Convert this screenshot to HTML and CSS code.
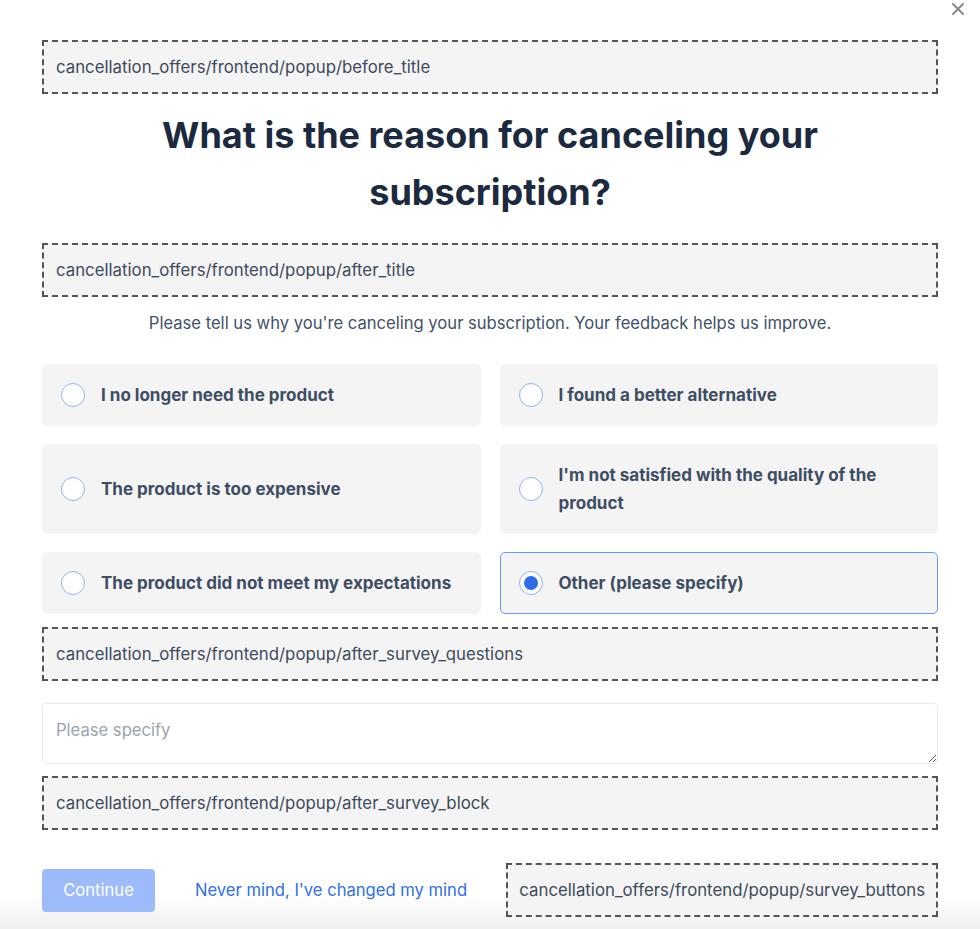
FILE: index.html
```html
<!DOCTYPE html>
<html lang="en">
<head>
    <meta charset="UTF-8">
    <meta name="viewport" content="width=device-width, initial-scale=1.0">
    <title>Cancel subscription</title>
    <link rel="stylesheet" href="styles.css">
</head>
<body>
    <div class="popup">
        <button class="close" aria-label="Close">
            <svg width="12" height="12" viewBox="0 0 12 12"><path d="M1 1L11 11M11 1L1 11" stroke="#8a8a8a" stroke-width="2" stroke-linecap="round"/></svg>
        </button>

        <div class="hook hook-top">cancellation_offers/frontend/popup/before_title</div>
        <h1 class="title">What is the reason for canceling your subscription?</h1>
        <div class="hook">cancellation_offers/frontend/popup/after_title</div>
        <p class="subtitle">Please tell us why you're canceling your subscription. Your feedback helps us improve.</p>

        <div class="options">
            <label class="option"><span class="radio"></span><span>I no longer need the product</span></label>
            <label class="option"><span class="radio"></span><span>I found a better alternative</span></label>
            <label class="option"><span class="radio"></span><span>The product is too expensive</span></label>
            <label class="option"><span class="radio"></span><span>I'm not satisfied with the quality of the product</span></label>
            <label class="option"><span class="radio"></span><span>The product did not meet my expectations</span></label>
            <label class="option selected"><span class="radio"></span><span>Other (please specify)</span></label>
        </div>

        <div class="hook hook-questions">cancellation_offers/frontend/popup/after_survey_questions</div>
        <textarea class="specify" placeholder="Please specify"></textarea>
        <div class="hook">cancellation_offers/frontend/popup/after_survey_block</div>

        <div class="actions">
            <button class="continue" disabled>Continue</button>
            <a class="nevermind" href="#">Never mind, I've changed my mind</a>
            <div class="hook hook-buttons">cancellation_offers/frontend/popup/survey_buttons</div>
        </div>
    </div>
</body>
</html>
```

FILE: styles.css
```css
html, body { height: 100%; }
body {
    margin: 0;
    font-family: Inter, "Noto Sans", sans-serif;
    color: #3b4a5e;
    background: linear-gradient(to bottom, #fff 0, #fff 895px, #efefef 929px);
    overflow: hidden;
}
.popup { position: relative; padding: 40px 42px 0; }
.close {
    position: absolute; top: 3px; right: 16px;
    background: none; border: none; padding: 0; cursor: pointer;
}
.hook {
    border: 2px dashed #555;
    background: #f4f4f4;
    padding: 13px 12px;
    font-size: 16.8px;
    line-height: 24px;
    color: #3d4a5c;
}
.title {
    margin: 13px 0 22px;
    text-align: center;
    font-size: 36px;
    line-height: 57px;
    font-weight: 700;
    color: #1b2a3f;
    padding: 0 100px;
}
.subtitle {
    margin: 14px 0 29px;
    text-align: center;
    font-size: 16.6px;
    line-height: 24px;
    color: #42526a;
}
.options {
    display: grid;
    grid-template-columns: 1fr 1fr;
    column-gap: 19px;
    row-gap: 18px;
}
.option {
    display: flex;
    align-items: center;
    gap: 16px;
    padding: 16px 18px;
    background: #f4f4f4;
    border: 1px solid #f4f4f4;
    border-radius: 5px;
    font-size: 17px;
    line-height: 28px;
    font-weight: 700;
    color: #3d4d63;
    cursor: pointer;
}
.radio {
    flex: none;
    width: 22px; height: 22px;
    border: 1px solid #8db2f6;
    border-radius: 50%;
    background: #fff;
    box-sizing: content-box;
    position: relative;
}
.option.selected { border-color: #6b9bf0; }
.option.selected .radio::after {
    content: "";
    position: absolute;
    top: 4px; left: 4px;
    width: 14px; height: 14px;
    border-radius: 50%;
    background: #2d6ee6;
}
.hook-questions { margin-top: 13px; }
.specify {
    display: block;
    box-sizing: border-box;
    width: 100%;
    height: 61px;
    margin: 22px 0 12px;
    padding: 16px 13px;
    border: 1px solid #e8eaee;
    border-radius: 4px;
    font-family: inherit;
    font-size: 16.6px;
    color: #3b4a5e;
    resize: vertical;
}
.specify::placeholder { color: #9aa3ae; }
.actions {
    display: flex;
    align-items: center;
    margin-top: 33px;
}
.continue {
    width: 113px; height: 43px;
    background: #9dbbfb;
    color: #fff;
    border: none;
    border-radius: 4px;
    font-family: inherit;
    font-size: 16.6px;
}
.nevermind {
    margin-left: 40px;
    color: #2f6fe8;
    text-decoration: none;
    font-size: 16.6px;
}
.hook-buttons { margin-left: auto; padding: 13px 11px; }
```
